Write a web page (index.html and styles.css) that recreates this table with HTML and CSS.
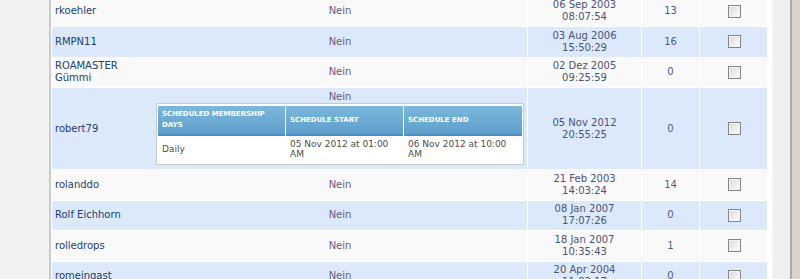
FILE: index.html
```html
<!DOCTYPE html>
<html lang="de">
<head>
<meta charset="utf-8">
<title>Mitglieder</title>
<link rel="stylesheet" href="styles.css">
</head>
<body>
<div class="page">
  <aside class="sidebar"></aside>
  <main class="main">
    <div class="list">
      <div class="row odd">
        <div class="namecell"><a class="user">rkoehler</a><span class="flag">Nein</span></div>
        <div class="date">06 Sep 2003<br>08:07:54</div>
        <div class="count">13</div>
        <div class="check"><input type="checkbox"></div>
      </div>
      <div class="row even">
        <div class="namecell"><a class="user">RMPN11</a><span class="flag">Nein</span></div>
        <div class="date">03 Aug 2006<br>15:50:29</div>
        <div class="count">16</div>
        <div class="check"><input type="checkbox"></div>
      </div>
      <div class="row odd">
        <div class="namecell"><a class="user">ROAMASTER Gümmi</a><span class="flag">Nein</span></div>
        <div class="date">02 Dez 2005<br>09:25:59</div>
        <div class="count">0</div>
        <div class="check"><input type="checkbox"></div>
      </div>
      <div class="row even">
        <div class="namecell"><a class="user">robert79</a>
          <div class="flag tall">
            <span>Nein</span>
            <div class="schedule">
              <div class="sched-grid">
                <div class="sh">Scheduled Membership Days</div>
                <div class="sh">Schedule Start</div>
                <div class="sh">Schedule End</div>
                <div class="sd">Daily</div>
                <div class="sd">05 Nov 2012 at 01:00 AM</div>
                <div class="sd">06 Nov 2012 at 10:00 AM</div>
              </div>
            </div>
          </div>
        </div>
        <div class="date">05 Nov 2012<br>20:55:25</div>
        <div class="count">0</div>
        <div class="check"><input type="checkbox"></div>
      </div>
      <div class="row odd">
        <div class="namecell"><a class="user">rolanddo</a><span class="flag">Nein</span></div>
        <div class="date">21 Feb 2003<br>14:03:24</div>
        <div class="count">14</div>
        <div class="check"><input type="checkbox"></div>
      </div>
      <div class="row even">
        <div class="namecell"><a class="user">Rolf Eichhorn</a><span class="flag">Nein</span></div>
        <div class="date">08 Jan 2007<br>17:07:26</div>
        <div class="count">0</div>
        <div class="check"><input type="checkbox"></div>
      </div>
      <div class="row odd">
        <div class="namecell"><a class="user">rolledrops</a><span class="flag">Nein</span></div>
        <div class="date">18 Jan 2007<br>10:35:43</div>
        <div class="count">1</div>
        <div class="check"><input type="checkbox"></div>
      </div>
      <div class="row even">
        <div class="namecell"><a class="user">romeingast</a><span class="flag">Nein</span></div>
        <div class="date">20 Apr 2004<br>11:02:17</div>
        <div class="count">0</div>
        <div class="check"><input type="checkbox"></div>
      </div>
    </div>
  </main>
  <div class="track"></div>
  <div class="frame"></div>
</div>
</body>
</html>
```

FILE: styles.css
```css
html, body {
  margin: 0;
  padding: 0;
  height: 279px;
  overflow: hidden;
  background: #ffffff;
}

.page {
  display: flex;
  height: 279px;
  font-family: "DejaVu Sans", Verdana, sans-serif;
  font-size: 10px;
  line-height: 12px;
}

.sidebar {
  width: 49px;
  flex: none;
  background: #f2f2f2;
  border-right: 2px solid #cbcbcb;
}

.main {
  flex: none;
  width: 719px;
  padding-left: 1px;
  background: #ffffff;
}

.list {
  width: 715px;
  margin-top: -3.5px;
  display: flex;
  flex-direction: column;
  row-gap: 1px;
  background: #ffffff;
}

.row {
  display: grid;
  grid-template-columns: 475px 113px 57px 67px;
  column-gap: 1px;
  min-height: 29.5px;
}

.row.odd > div { background: #f9f9f9; }
.row.even > div { background: #dbe9fb; }

.namecell {
  display: grid;
  grid-template-columns: 101px 374px;
  align-items: center;
}

.user {
  padding: 0 6px 0 3px;
  color: #21406f;
  text-decoration: none;
}

.flag {
  text-align: center;
  color: #675a84;
}

.flag.tall {
  display: flex;
  flex-direction: column;
  align-items: center;
  padding: 3px 0 4px;
}

.date {
  display: flex;
  align-items: center;
  justify-content: center;
  text-align: center;
  color: #4b5375;
}

.count {
  display: flex;
  align-items: center;
  justify-content: center;
  color: #4d5a86;
}

.check {
  display: flex;
  align-items: center;
  justify-content: center;
}

.check input {
  appearance: none;
  -webkit-appearance: none;
  margin: 0 0 0 1px;
  width: 13px;
  height: 13px;
  box-sizing: border-box;
  border: 1px solid #858585;
  box-shadow: inset 0 0 0 1px #f4f4f4;
  background: linear-gradient(135deg, #d6d6d6 0%, #eeeeee 55%, #ffffff 100%);
}

.schedule {
  width: 364px;
  padding: 2px 1px 2px 1px;
  border: 1px solid #c9c9c9;
  background: #ffffff;
  text-align: left;
}

.sched-grid {
  display: grid;
  grid-template-columns: 127px 117px 118px;
  column-gap: 1px;
}

.sh {
  display: flex;
  align-items: center;
  min-height: 28px;
  padding: 0 4px;
  background: linear-gradient(#7cb7db, #5d9fcb);
  border-bottom: 2px solid #4b8dbd;
  color: #ffffff;
  font-weight: bold;
  font-size: 7px;
  line-height: 11px;
  text-transform: uppercase;
}

.sd {
  display: flex;
  align-items: center;
  min-height: 26px;
  padding: 0 4px;
  color: #4d4d4d;
  font-size: 9px;
  line-height: 10px;
}

.track {
  flex: none;
  width: 17px;
  background: #f0f0f0;
  border-left: 2px solid #fafafa;
  margin-left: 0;
  border-right: 2px solid #a9a9a9;
}

.frame {
  flex: 1;
  background: #d7d4cd;
}
```
